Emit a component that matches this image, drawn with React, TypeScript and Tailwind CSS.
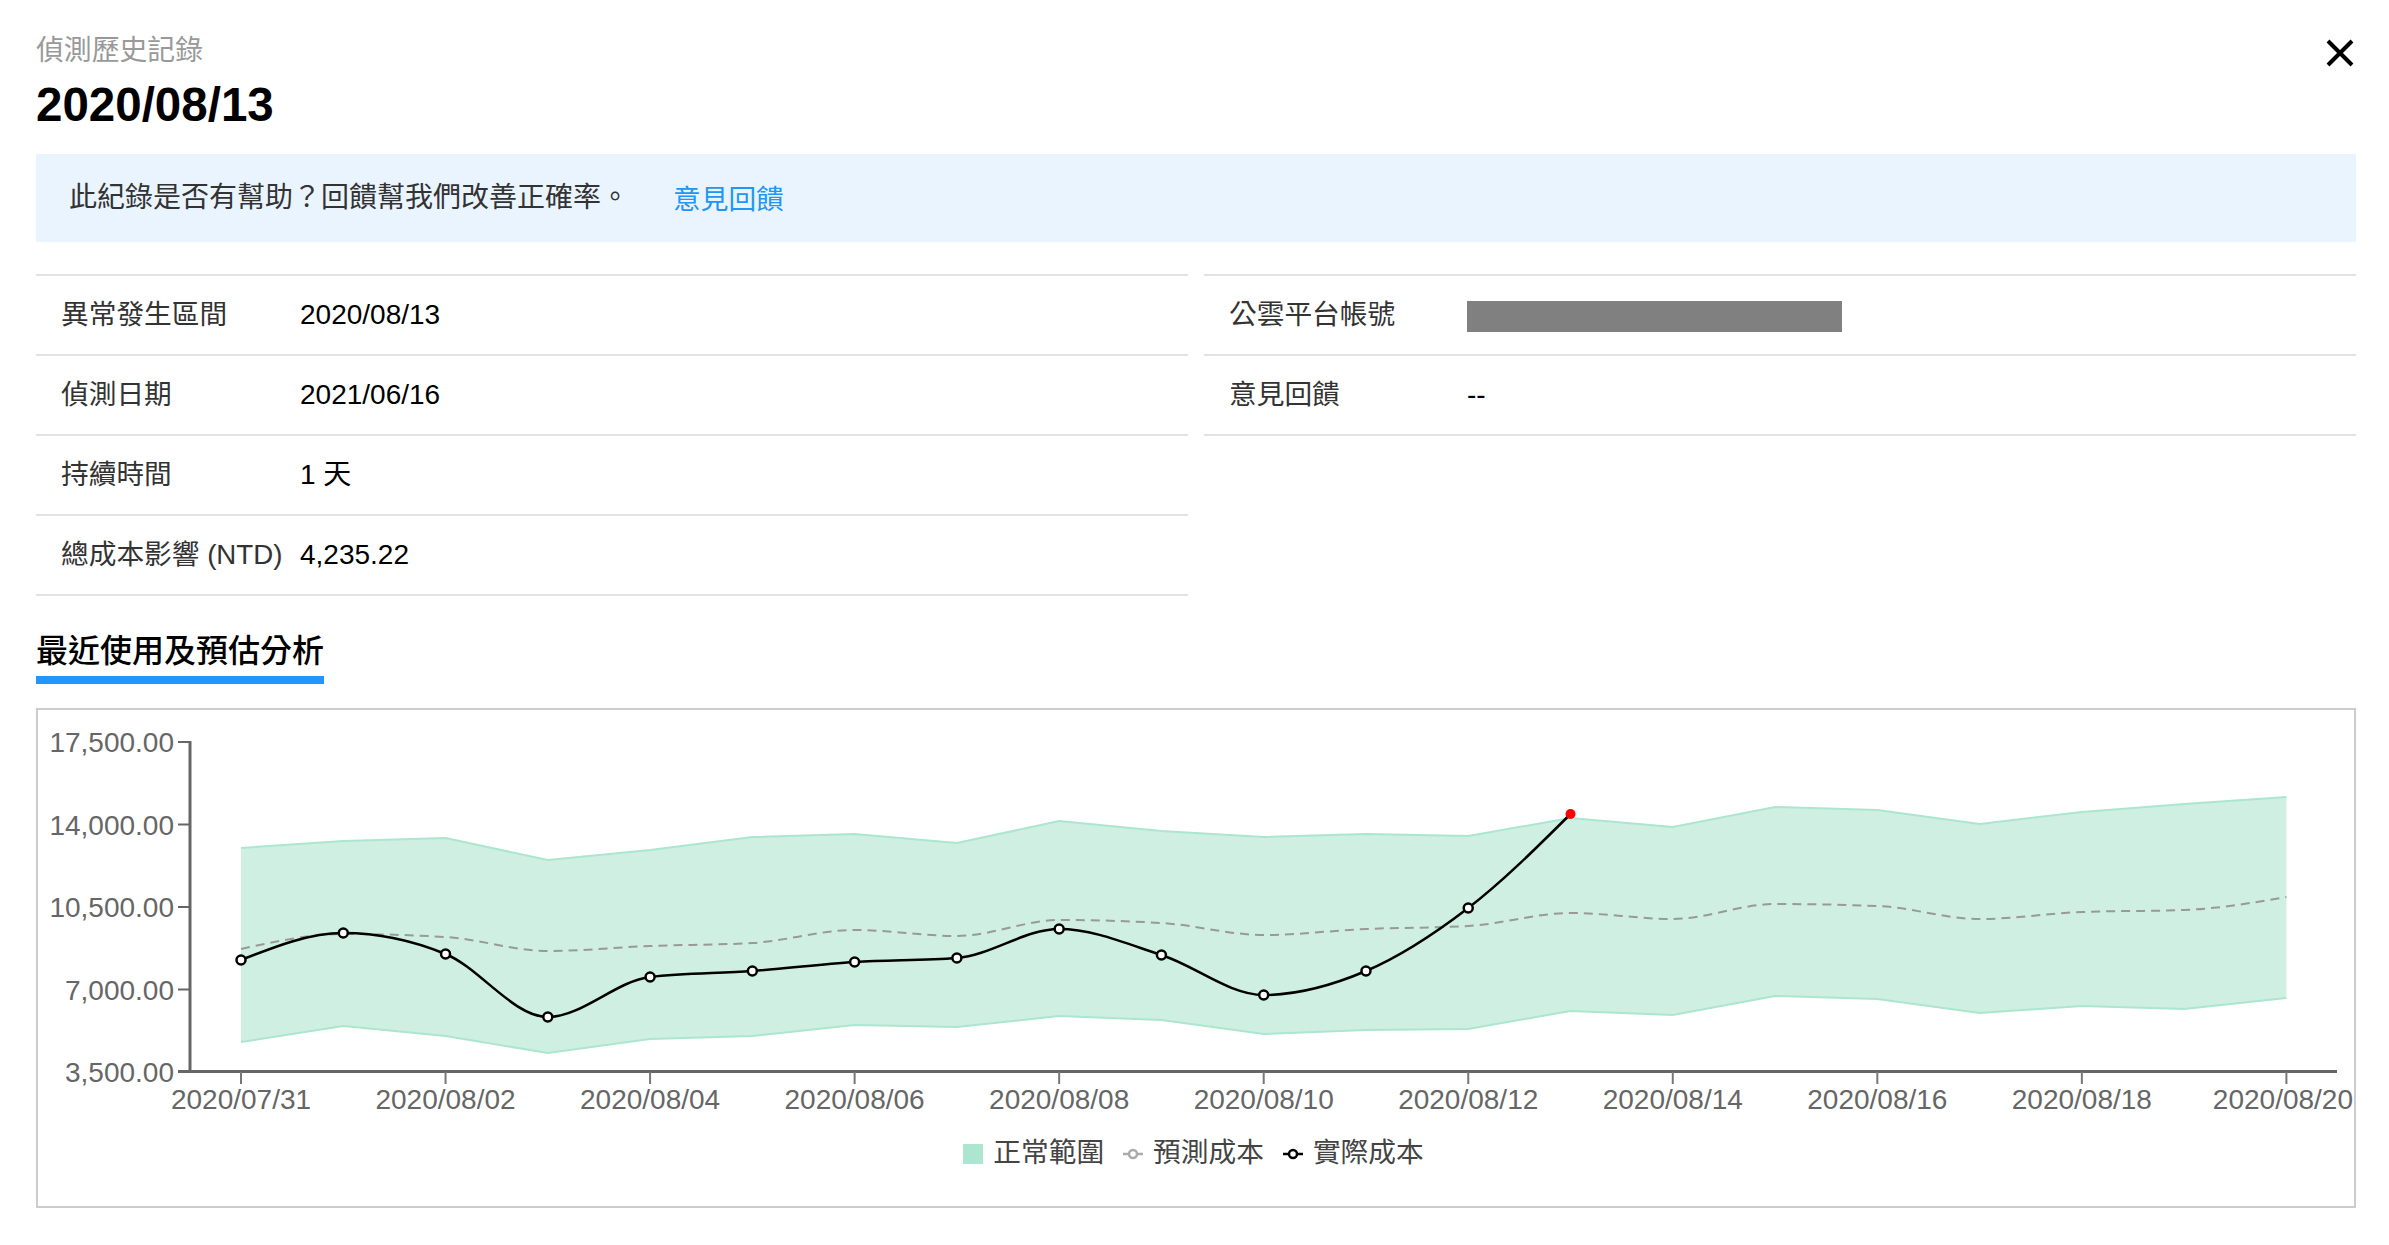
import React from "react";

const upper = [848, 841, 838, 860, 850, 837, 834, 843, 821, 831, 837, 834, 836, 818, 827, 807, 810, 824, 812, 804, 797];
const lower = [1042, 1026, 1036, 1053, 1039, 1036, 1025, 1027, 1016, 1020, 1034, 1030, 1029, 1011, 1015, 996, 999, 1013, 1006, 1009, 998];
const predicted = [949, 934, 937, 951, 946, 943, 930, 936, 920, 923, 935, 929, 926, 913, 919, 904, 906, 919, 912, 910, 897];
const actual = [960, 933, 954, 1017, 977, 971, 962, 958, 929, 955, 995, 971, 908, 814];

const xAt = (i: number) => 241 + 102.27 * i;

const yTicks = [
  { label: "17,500.00", y: 742 },
  { label: "14,000.00", y: 824.5 },
  { label: "10,500.00", y: 907 },
  { label: "7,000.00", y: 989.5 },
  { label: "3,500.00", y: 1071.5 },
];

const xTicks = ["2020/07/31", "2020/08/02", "2020/08/04", "2020/08/06", "2020/08/08", "2020/08/10", "2020/08/12", "2020/08/14", "2020/08/16", "2020/08/18", "2020/08/20"];

// same curve as d3 curveMonotoneX
function monotonePath(values: number[]) {
  const h = xAt(1) - xAt(0);
  const d = values.slice(1).map((v, i) => (v - values[i]) / h);
  const m = values.map((_, i) => {
    if (i === 0 || i === values.length - 1) return 0;
    const a = d[i - 1];
    const b = d[i];
    if (a * b <= 0) return 0;
    return (Math.sign(a) + Math.sign(b)) * Math.min(Math.abs(a), Math.abs(b), 0.25 * Math.abs(a + b));
  });
  m[0] = (3 * d[0] - m[1]) / 2;
  m[values.length - 1] = (3 * d[d.length - 1] - m[values.length - 2]) / 2;
  let path = `M${xAt(0)},${values[0]}`;
  for (let i = 1; i < values.length; i++) {
    const x0 = xAt(i - 1);
    const x1 = xAt(i);
    path += `C${x0 + h / 3},${values[i - 1] + (m[i - 1] * h) / 3} ${x1 - h / 3},${values[i] - (m[i] * h) / 3} ${x1},${values[i]}`;
  }
  return path;
}

const linePath = (values: number[]) => values.map((v, i) => `${i === 0 ? "M" : "L"}${xAt(i)},${v}`).join("");

const bandPath =
  upper.map((v, i) => `${i === 0 ? "M" : "L"}${xAt(i)},${v}`).join("") +
  lower
    .map((v, i) => `L${xAt(i)},${v}`)
    .reverse()
    .join("") +
  "Z";

const rowsLeft = [
  { label: "異常發生區間", value: "2020/08/13" },
  { label: "偵測日期", value: "2021/06/16" },
  { label: "持續時間", value: "1 天" },
  { label: "總成本影響 (NTD)", value: "4,235.22" },
];

function Row({ label, labelWidth = "w-[239px]", children }: { label: string; labelWidth?: string; children: React.ReactNode }) {
  return (
    <div className="flex h-[80px] items-center border-b-2 border-[#e1e3e8] pl-[25px]">
      <div className={`${labelWidth} shrink-0 whitespace-nowrap text-[27.7px] text-[#333]`}>{label}</div>
      <div className="text-black">{children}</div>
    </div>
  );
}

function LegendMark({ color }: { color: string }) {
  return (
    <svg width="20" height="20" viewBox="0 0 20 20" className="mt-[2px]">
      <line x1="0" y1="10" x2="20" y2="10" stroke={color} strokeWidth="2.5" />
      <circle cx="10" cy="10" r="4" fill="#fff" stroke={color} strokeWidth="2.5" />
    </svg>
  );
}

export default function App() {
  return (
    <div className="min-h-screen bg-white pl-[36px] pr-[33px] pt-[30px] font-['Liberation_Sans','Noto_Sans_CJK_TC',sans-serif] text-[28px] leading-[42px]">
      <div className="flex items-start justify-between">
        <div>
          <div className="text-[27.85px] text-[#999]">偵測歷史記錄</div>
          <h1 className="mt-[5px] text-[47.5px] font-bold leading-[56px] text-black">2020/08/13</h1>
        </div>
        <button className="mr-[1px] mt-[8px]">
          <svg width="30" height="30" viewBox="0 0 30 30" className="block">
            <path d="M3 3L27 27M27 3L3 27" stroke="#000" strokeWidth="4" fill="none" />
          </svg>
        </button>
      </div>

      <div className="mt-[21px] flex h-[88px] items-center bg-[#eaf4ff] pl-[33px]">
        <span className="text-[#333]">此紀錄是否有幫助？回饋幫我們改善正確率。</span>
        <a className="ml-[44px] mt-[3px] text-[27.7px] text-[#2196f3]">意見回饋</a>
      </div>

      <div className="mt-[32px] grid grid-cols-2 gap-x-[16px]">
        <div className="border-t-2 border-[#e1e3e8]">
          {rowsLeft.map((r) => (
            <Row key={r.label} label={r.label}>
              {r.value}
            </Row>
          ))}
        </div>
        <div className="self-start border-t-2 border-[#e1e3e8]">
          <Row label="公雲平台帳號" labelWidth="w-[238px]">
            <div className="mt-[2px] h-[31px] w-[375px] bg-[#808080]" />
          </Row>
          <Row label="意見回饋" labelWidth="w-[238px]">
            --
          </Row>
        </div>
      </div>

      <div className="mt-[31px] inline-block border-b-8 border-[#2196ff] text-[32px] font-medium leading-[49px] text-black">
        最近使用及預估分析
      </div>

      <div className="mt-[24px] h-[500px] border-2 border-[#ccc]">
        <svg width="2316" height="412" viewBox="38 710 2316 412" className="block">
          <path d={bandPath} fill="#ceefe2" />
          <path d={linePath(upper)} fill="none" stroke="#ace6d0" strokeWidth="2" />
          <path d={linePath(lower)} fill="none" stroke="#ace6d0" strokeWidth="2" />

          <line x1="190" y1="741" x2="190" y2="1073" stroke="#666" strokeWidth="3" />
          <line x1="178" y1="1071.5" x2="2337" y2="1071.5" stroke="#666" strokeWidth="3" />
          {yTicks.map((t) => (
            <g key={t.label}>
              <line x1="178" y1={t.y} x2="190" y2={t.y} stroke="#666" strokeWidth="2" />
              <text x="174" y={t.y + 10} textAnchor="end" className="fill-[#666] text-[28px]">
                {t.label}
              </text>
            </g>
          ))}
          {xTicks.map((label, i) => (
            <g key={label}>
              <line x1={xAt(i * 2)} y1="1072" x2={xAt(i * 2)} y2="1084" stroke="#777" strokeWidth="2" />
              <text
                x={i === xTicks.length - 1 ? 2353 : xAt(i * 2)}
                y="1109"
                textAnchor={i === xTicks.length - 1 ? "end" : "middle"}
                className="fill-[#666] text-[28px]"
              >
                {label}
              </text>
            </g>
          ))}

          <path d={monotonePath(predicted)} fill="none" stroke="#999" strokeWidth="2" strokeDasharray="9 6" />
          <path d={monotonePath(actual)} fill="none" stroke="#000" strokeWidth="2.5" />
          {actual.slice(0, -1).map((v, i) => (
            <circle key={i} cx={xAt(i)} cy={v} r="4.5" fill="#fff" stroke="#000" strokeWidth="2.5" />
          ))}
          <circle cx={xAt(13)} cy={actual[13]} r="5" fill="#f00" />
        </svg>

        <div className="flex justify-center gap-[19px] pr-[5px] pt-[10px] text-[27.7px] text-[#444]">
          <div className="flex gap-[10px]">
            <div className="mt-[12px] h-[20px] w-[20px] bg-[#ace6d0]" />
            <span>正常範圍</span>
          </div>
          <div className="flex items-center gap-[10px]">
            <LegendMark color="#aaa" />
            <span>預測成本</span>
          </div>
          <div className="flex items-center gap-[10px]">
            <LegendMark color="#000" />
            <span>實際成本</span>
          </div>
        </div>
      </div>
    </div>
  );
}
